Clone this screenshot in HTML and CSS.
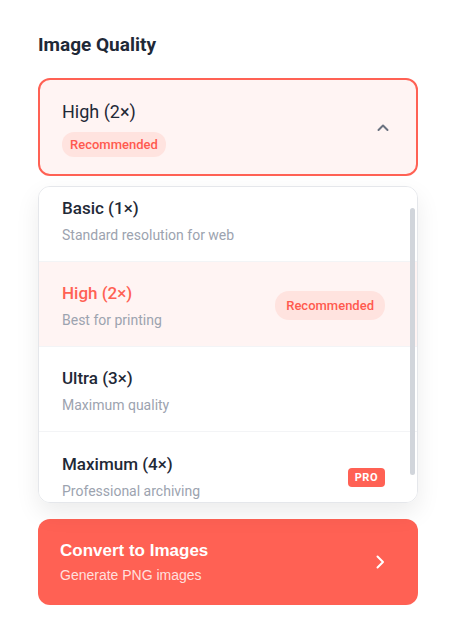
FILE: index.html
```html
<!DOCTYPE html>
<html lang="en">
<head>
    <meta charset="UTF-8">
    <meta name="viewport" content="width=device-width, initial-scale=1.0">
    <title>Image Quality</title>
    <link rel="stylesheet" href="styles.css">
</head>
<body>
    <div class="panel">
        <h2 class="section-title">Image Quality</h2>

        <div class="select open" id="qualitySelect">
            <div class="select-info">
                <div class="select-value">High (2×)</div>
                <span class="badge badge-small">Recommended</span>
            </div>
            <svg class="chevron" width="14" height="14" viewBox="0 0 14 14" fill="none">
                <path d="M2.5 9 L7 4.5 L11.5 9" stroke="#6b7280" stroke-width="2" stroke-linecap="round" stroke-linejoin="round"/>
            </svg>
        </div>

        <div class="dropdown-wrap">
            <div class="dropdown" id="dropdown">
                <div class="option">
                    <div class="option-text">
                        <div class="option-title">Basic (1×)</div>
                        <div class="option-desc">Standard resolution for web</div>
                    </div>
                </div>
                <div class="option selected">
                    <div class="option-text">
                        <div class="option-title">High (2×)</div>
                        <div class="option-desc">Best for printing</div>
                    </div>
                    <span class="badge">Recommended</span>
                </div>
                <div class="option">
                    <div class="option-text">
                        <div class="option-title">Ultra (3×)</div>
                        <div class="option-desc">Maximum quality</div>
                    </div>
                </div>
                <div class="option">
                    <div class="option-text">
                        <div class="option-title">Maximum (4×)</div>
                        <div class="option-desc">Professional archiving</div>
                    </div>
                    <span class="pro-badge">PRO</span>
                </div>
            </div>
            <div class="scroll-thumb"></div>
        </div>

        <button class="convert-btn">
            <span class="convert-text">
                <span class="convert-title">Convert to Images</span>
                <span class="convert-sub">Generate PNG images</span>
            </span>
            <svg width="16" height="16" viewBox="0 0 16 16" fill="none">
                <path d="M5.5 2.5 L11 8 L5.5 13.5" stroke="#fff" stroke-width="2" stroke-linecap="round" stroke-linejoin="round"/>
            </svg>
        </button>
    </div>

    <script>
        document.getElementById('dropdown').scrollTop = 10;
    </script>
</body>
</html>
```

FILE: styles.css
```css
body {
    margin: 0;
    background: #ffffff;
    font-family: "Segoe UI", Roboto, "Noto Sans", Arial, sans-serif;
    color: #1f2937;
}

.panel {
    padding: 33px 43px 0 38px;
}

.section-title {
    margin: 0 0 21px;
    font-size: 19px;
    line-height: 24px;
    font-weight: 700;
    color: #1f2937;
}

.select {
    display: flex;
    align-items: center;
    justify-content: space-between;
    padding: 20px 26px 17px 22px;
    border: 2px solid #ff6154;
    border-radius: 12px;
    background: #fff4f3;
}

.select-info {
    display: flex;
    flex-direction: column;
    align-items: flex-start;
    gap: 8px;
}

.select-value {
    font-size: 18px;
    line-height: 24px;
    font-weight: 400;
}

.chevron {
    margin-bottom: 2px;
}

.badge {
    display: inline-block;
    padding: 0 11px;
    height: 29px;
    line-height: 29px;
    border-radius: 14px;
    background: #ffe3df;
    color: #ff5a4f;
    font-size: 13px;
    font-weight: 500;
}

.badge-small {
    padding: 0 8px;
    height: 25px;
    line-height: 25px;
    border-radius: 12px;
}

.dropdown-wrap {
    position: relative;
    margin-top: 10px;
}

.dropdown {
    height: 315px;
    overflow-y: auto;
    border: 1px solid #e5e7eb;
    border-radius: 12px;
    background: #fff;
    box-shadow: 0 10px 25px rgba(0, 0, 0, 0.08);
    scrollbar-width: none;
}

.dropdown::-webkit-scrollbar {
    display: none;
}

.scroll-thumb {
    position: absolute;
    top: 22px;
    right: 3px;
    width: 5px;
    height: 267px;
    border-radius: 3px;
    background: #d1d5db;
}

.option {
    display: flex;
    align-items: center;
    justify-content: space-between;
    box-sizing: border-box;
    height: 85px;
    padding: 3px 32px 0 23px;
    border-bottom: 1px solid #f3f4f6;
}

.option:last-child {
    border-bottom: none;
}

.option-text {
    display: flex;
    flex-direction: column;
    gap: 5px;
}

.option-title {
    font-size: 17px;
    line-height: 24px;
    font-weight: 500;
    color: #1f2937;
}

.option-desc {
    font-size: 14px;
    line-height: 20px;
    color: #9ca3af;
}

.option.selected {
    background: #fff4f3;
}

.option.selected .option-title {
    color: #ff6154;
}

.pro-badge {
    display: inline-block;
    padding: 0 7px;
    height: 19px;
    line-height: 19px;
    border-radius: 4px;
    background: #ff6154;
    color: #fff;
    font-size: 11px;
    font-weight: 700;
    letter-spacing: 0.5px;
    margin-top: 2px;
}

.convert-btn {
    display: flex;
    align-items: center;
    justify-content: space-between;
    width: 100%;
    height: 86px;
    margin-top: 16px;
    padding: 0 30px 0 22px;
    border: none;
    border-radius: 12px;
    background: #ff6154;
    color: #fff;
    font-family: "Liberation Sans", Arial, sans-serif;
    text-align: left;
    cursor: pointer;
}

.convert-text {
    display: flex;
    flex-direction: column;
    gap: 4px;
}

.convert-title {
    font-size: 17px;
    line-height: 22px;
    font-weight: 700;
}

.convert-sub {
    font-size: 14px;
    line-height: 18px;
    color: rgba(255, 255, 255, 0.82);
}
```
